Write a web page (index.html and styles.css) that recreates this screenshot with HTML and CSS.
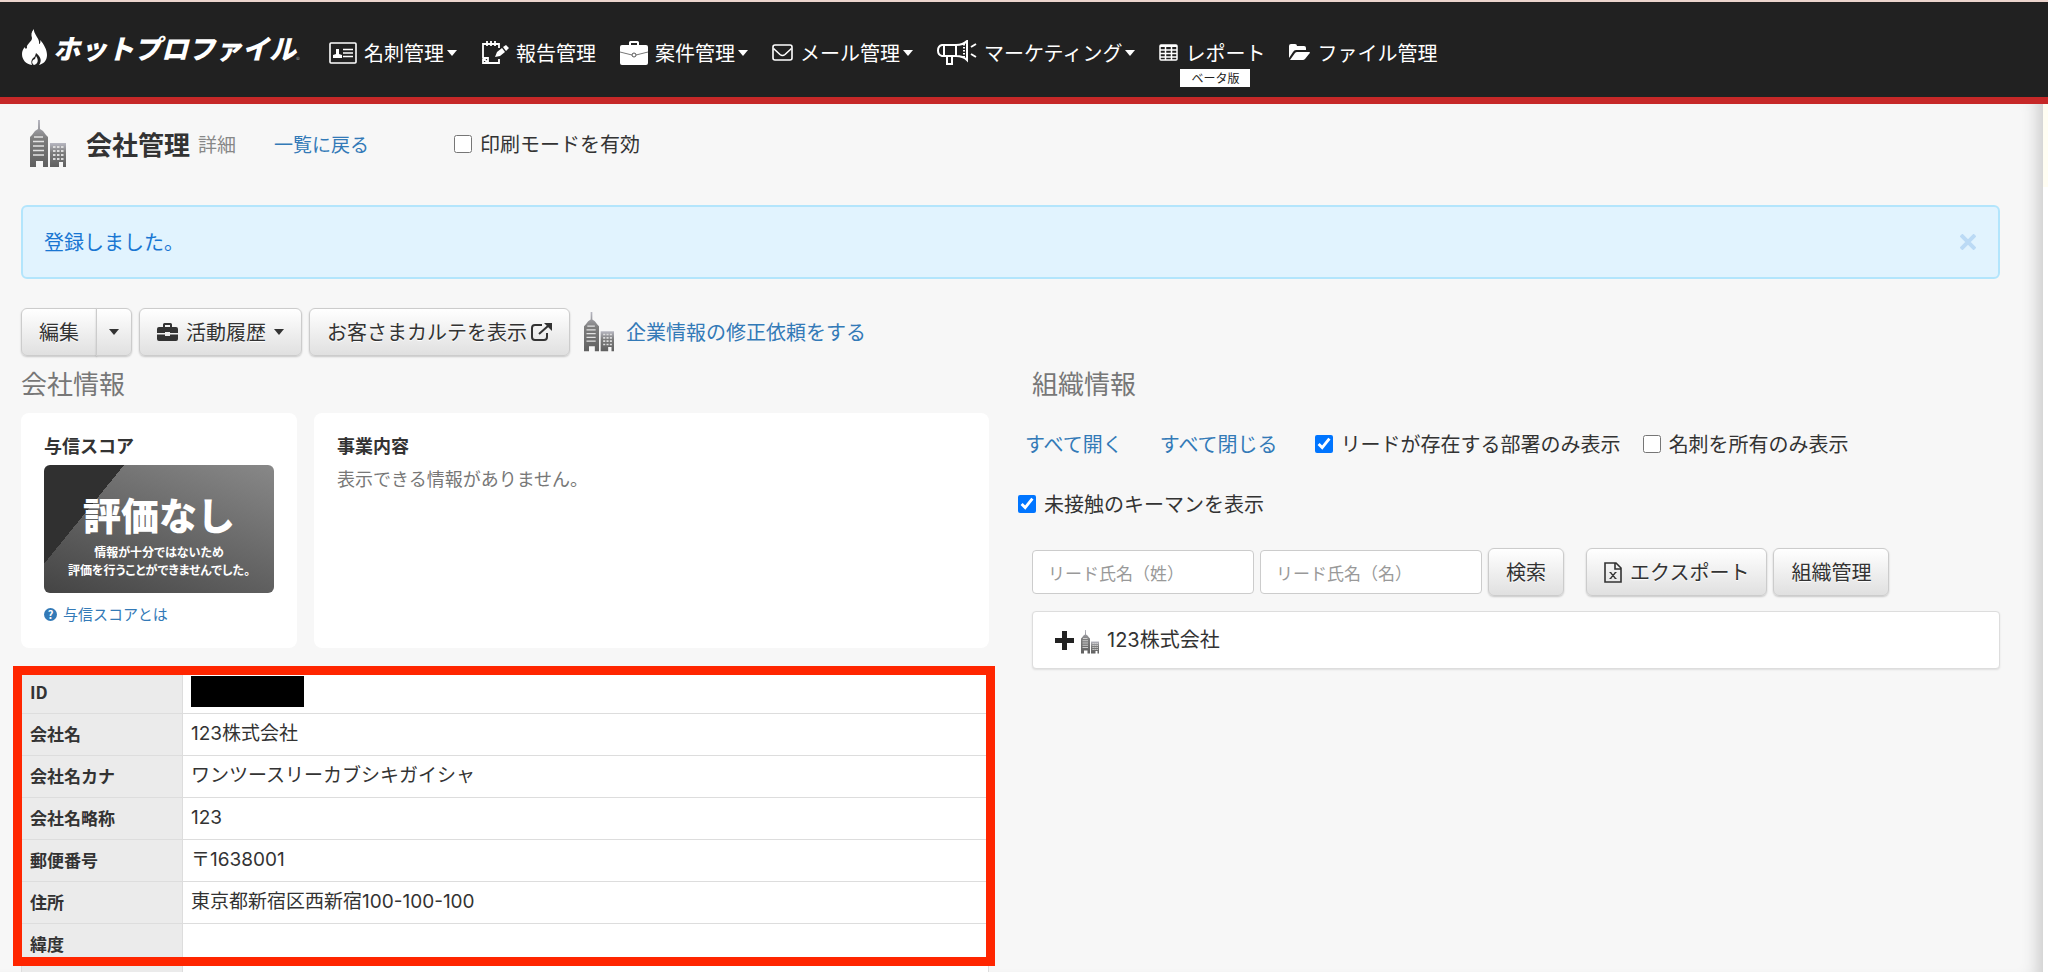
FILE: index.html
```html
<!DOCTYPE html>
<html lang="ja">
<head>
    <meta charset="UTF-8">
    <meta name="viewport" content="width=device-width, initial-scale=1.0">
    <title>会社管理 詳細</title>
    <link rel="stylesheet" href="styles.css">
</head>
<body>
    <!-- 共通アイコン -->
    <svg class="defs" aria-hidden="true">
        <defs>
            <linearGradient id="steel" x1="0" y1="0" x2="0" y2="1">
                <stop offset="0" stop-color="#b8b8c2"/>
                <stop offset="0.4" stop-color="#7d7d7d"/>
                <stop offset="1" stop-color="#606060"/>
            </linearGradient>
        </defs>
        <symbol id="building" viewBox="0 0 36 48">
            <path fill="url(#steel)" d="M8 0h2v9l3 2 3 4 2 2v30h-5v-6H6v6H0V17l2-2 3-4 3-2z"/>
            <path fill="url(#steel)" d="M20 23h16v24h-3v-5h-4v5h-9z"/>
            <path stroke="#e2e2e2" stroke-width="1.600" d="M4 17h9M3 21.500h11M3 26h11M3 30.500h11M3 35h11"/>
            <path stroke="#dcdcdc" stroke-width="2" stroke-dasharray="2.500 1.500" d="M23 27h11M23 31h11M23 35h11M23 39h11"/>
        </symbol>
    </svg>

    <header class="header">
        <a href="#" class="logo">
            <svg class="flame" viewBox="0 0 25 37">
                <path fill="#fff" d="M12 0c-1 5 6 9 5 15 1 0 2-2 1-4 4 4 7 10 7 15 0 6-4 9-8 10 3-4 2-8-3-12-1 3-1 4-3 5-2 2-2 5-1 7C4 35 0 31 0 25c0-3 1-5 3-7 0 2 1 2 2 1-1-4 5-6 5-10-1-3-1-6 2-9z"/>
                <path fill="#fff" d="M14 27c3 4 2 8-2 9-3-2-2-5 1-6z"/>
            </svg>
            <span class="logo-text">ホットプロファイル</span><small>®</small>
        </a>
        <nav class="nav">
            <a href="#">
                <svg class="i-card" viewBox="0 0 28 22" fill="none" stroke="#fff">
                    <rect x="1" y="1" width="26" height="20" rx="1" stroke-width="1.600"/>
                    <path stroke-width="1.600" d="M14 7.500h10M14 11h10M14 14.500h10"/>
                    <path fill="#fff" stroke="none" d="M4 16v-3l3-1V7h3v5l3 1v3z"/>
                </svg>
                <span>名刺管理</span><i class="caret"></i>
            </a>
            <a href="#">
                <svg class="i-note" viewBox="0 0 28 25" fill="none" stroke="#fff" stroke-width="1.800">
                    <path d="M18 19v4H7l-5-5V4h16v4M2 18h5v5M2 19v4h4"/>
                    <path d="M6 1v5M10 1v5M14 1v5"/>
                    <path fill="#fff" stroke="none" d="M14 17l2-5 5-4 3 4-5 4zM22 7l3-2 3 3-3 3z"/>
                </svg>
                <span>報告管理</span>
            </a>
            <a href="#">
                <svg class="i-case" viewBox="0 0 28 24" fill="#fff">
                    <path d="M9 4V1.500Q9 0 10.500 0h7Q19 0 19 1.500V4h-2V2h-6v2z"/>
                    <rect y="4" width="28" height="20" rx="2"/>
                    <path fill="none" stroke="#777" stroke-width="1" d="M0 11l12 3M28 11l-12 3"/>
                    <circle cx="14" cy="14" r="2" fill="none" stroke="#555"/>
                </svg>
                <span>案件管理</span><i class="caret"></i>
            </a>
            <a href="#">
                <svg class="i-mail" viewBox="0 0 21 17" fill="none" stroke="#fff" stroke-width="1.600">
                    <rect x="1" y="1" width="19" height="15" rx="2"/>
                    <path d="M1.500 4.500l6.500 6q2.500 2 5 0l6.500-6"/>
                </svg>
                <span>メール管理</span><i class="caret"></i>
            </a>
            <a href="#">
                <svg class="i-horn" viewBox="0 0 40 25" fill="none" stroke="#fff" stroke-width="2">
                    <path d="M19 5H5Q1 6 1 10.500T5 16h14zM7 5v11M19 5q7 0 11-4v19q-4-4-11-4M10 16v8h5v-8M34 7l5-3M34 14l5 3"/>
                    <path stroke-dasharray="1.500 1.500" d="M27 4v13"/>
                </svg>
                <span>マーケティング</span><i class="caret"></i>
            </a>
            <a href="#">
                <svg class="i-grid" viewBox="0 0 19 17" fill="none" stroke="#fff" stroke-width="1.500">
                    <rect x="1" y="1" width="17" height="15" rx="1"/>
                    <path stroke-width="2" d="M1 2h17"/>
                    <path d="M1 6h17M1 9.500h17M1 13h17M6.500 2v14M12.500 2v14"/>
                </svg>
                <span class="beta-item">レポート<em class="beta">ベータ版</em></span>
            </a>
            <a href="#">
                <svg class="i-folder" viewBox="0 0 21 17" fill="#fff">
                    <path d="M0 14V2Q0 0 2 0h4q2 0 2 2h7q2 0 2 2v2H7Q5 6 4 8z"/>
                    <path d="M1 16L6 9q1-1 2-1h12q2 0 0 2l-4 5q-1 1-2 1z"/>
                </svg>
                <span>ファイル管理</span>
            </a>
        </nav>
    </header>

    <div class="page">
        <main class="main">
            <div class="title-row">
                <svg class="building-lg"><use href="#building"/></svg>
                <h1>会社管理</h1>
                <span class="sub">詳細</span>
                <a href="#" class="back">一覧に戻る</a>
                <label class="check"><input type="checkbox">印刷モードを有効</label>
            </div>

            <div class="alert">
                <span>登録しました。</span>
                <button class="close" aria-label="閉じる">
                    <svg viewBox="0 0 16 16" stroke="#bbdaf5" stroke-width="4"><path d="M1 1l14 14M15 1L1 15"/></svg>
                </button>
            </div>

            <div class="toolbar">
                <div class="btn-group">
                    <button class="btn">編集</button>
                    <button class="btn btn-drop" aria-label="メニュー"><i class="caret"></i></button>
                </div>
                <button class="btn">
                    <svg class="i-bag" viewBox="0 0 21 18" fill="#333">
                        <path d="M6 4V1.500Q6 0 7.500 0h6Q15 0 15 1.500V4h4q2 0 2 2v4h-8V9H8v1H0V6q0-2 2-2zm2 0h5V2H8zM0 11.500h8V13h5v-1.500h8V16q0 2-2 2H2q-2 0-2-2z"/>
                    </svg>
                    活動履歴<i class="caret"></i>
                </button>
                <button class="btn">お客さまカルテを表示<svg class="i-ext" viewBox="0 0 21 18" fill="none" stroke="#333" stroke-width="2">
                        <path d="M11 2H4Q1 2 1 5v9q0 3 3 3h9q3 0 3-3v-4M8 11l9-8"/>
                        <path fill="#333" stroke="none" d="M13 0h8v8z"/>
                    </svg></button>
                <svg class="building-md"><use href="#building"/></svg>
                <a href="#">企業情報の修正依頼をする</a>
            </div>

            <div class="columns">
                <section>
                    <h2>会社情報</h2>
                    <div class="cards">
                        <div class="card">
                            <h3>与信スコア</h3>
                            <div class="score">
                                <strong>評価なし</strong>
                                <p>情報が十分ではないため<br>評価を行うことができませんでした。</p>
                            </div>
                            <a href="#" class="help"><b>?</b>与信スコアとは</a>
                        </div>
                        <div class="card">
                            <h3>事業内容</h3>
                            <p class="empty">表示できる情報がありません。</p>
                        </div>
                    </div>
                    <div class="table-wrap">
                        <table class="info">
                            <tbody>
                                <tr><th>ID</th><td><span class="masked"></span></td></tr>
                                <tr><th>会社名</th><td>123株式会社</td></tr>
                                <tr><th>会社名カナ</th><td>ワンツースリーカブシキガイシャ</td></tr>
                                <tr><th>会社名略称</th><td>123</td></tr>
                                <tr><th>郵便番号</th><td>〒1638001</td></tr>
                                <tr><th>住所</th><td>東京都新宿区西新宿100-100-100</td></tr>
                                <tr><th>緯度</th><td></td></tr>
                                <tr><th></th><td></td></tr>
                            </tbody>
                        </table>
                        <div class="marker"></div>
                    </div>
                </section>

                <section>
                    <h2>組織情報</h2>
                    <div class="filters">
                        <a href="#">すべて開く</a>
                        <a href="#">すべて閉じる</a>
                        <label class="check"><input type="checkbox" checked>リードが存在する部署のみ表示</label>
                        <label class="check second"><input type="checkbox">名刺を所有のみ表示</label>
                    </div>
                    <div class="filters keyman">
                        <label class="check"><input type="checkbox" checked>未接触のキーマンを表示</label>
                    </div>
                    <form class="search">
                        <input type="text" aria-label="リード氏名（姓）" placeholder="リード氏名（姓）">
                        <input type="text" aria-label="リード氏名（名）" placeholder="リード氏名（名）">
                        <button type="button" class="btn">検索</button>
                        <button type="button" class="btn export">
                            <svg class="i-xls" viewBox="0 0 18 21" fill="none" stroke="#333" stroke-width="1.600">
                                <path d="M1 1h11l5 5v14H1zM11 1v6h6"/>
                                <path stroke-width="1.200" d="M6.500 10.500l5 6M11.500 10.500l-5 6M5.500 10.500h2M10.500 10.500h2M5.500 16.500h2M10.500 16.500h2"/>
                            </svg>
                            エクスポート
                        </button>
                        <button type="button" class="btn">組織管理</button>
                    </form>
                    <div class="tree">
                        <svg class="i-plus" viewBox="0 0 19 19" fill="#222"><path d="M7 0h5v7h7v5h-7v7H7v-7H0V7h7z"/></svg>
                        <svg class="building-sm"><use href="#building"/></svg>
                        <span>123株式会社</span>
                    </div>
                </section>
            </div>
        </main>
        <aside class="side"></aside>
    </div>
</body>
</html>
```
FILE: styles.css
```css
* {
    box-sizing: border-box;
}
body {
    margin: 0;
    height: 100vh;
    overflow: hidden;
    display: flex;
    flex-direction: column;
    background-color: #f7f7f7;
    color: #333;
    font-family: "Noto Sans CJK JP", sans-serif;
    font-size: 20px;
    line-height: 24px;
}
h1, h2, h3, p {
    margin: 0;
}
a {
    color: #337ab7;
    text-decoration: none;
}
svg {
    display: block;
    flex: none;
}
.defs {
    position: absolute;
    width: 0;
    height: 0;
}
.caret {
    border: 5px solid transparent;
    border-top: 6px solid currentColor;
    border-bottom: 0;
}

/* ヘッダー */
.header {
    flex: none;
    display: flex;
    align-items: center;
    height: 104px;
    padding-left: 22px;
    background-color: #212121;
    border-top: 2px solid #ecd4cd;
    border-bottom: 7px solid #c62828;
    white-space: nowrap;
}
.header a {
    color: #fff;
}
.logo {
    display: flex;
    align-items: center;
    width: 307px;
    padding-bottom: 4px;
}
.flame {
    width: 25px;
    height: 37px;
    margin-right: 6px;
}
.logo-text {
    font-size: 27px;
    font-weight: 900;
    font-style: italic;
    line-height: 36px;
}
.logo small {
    align-self: flex-end;
    font-size: 8px;
    line-height: 12px;
    color: #999;
}
.nav {
    display: flex;
    gap: 24px;
    padding-top: 6px;
}
.nav a {
    display: flex;
    align-items: center;
    gap: 7px;
}
.nav .caret {
    margin-left: -4px;
}
.i-card {
    width: 28px;
    height: 22px;
}
.i-note {
    width: 28px;
    height: 25px;
}
.i-case {
    width: 28px;
    height: 24px;
}
.i-mail, .i-folder {
    width: 21px;
    height: 17px;
}
.i-horn {
    width: 40px;
    height: 25px;
}
.i-grid {
    width: 19px;
    height: 17px;
}
.beta-item {
    position: relative;
}
.beta {
    position: absolute;
    top: 28px;
    left: -5px;
    width: 70px;
    background-color: #fff;
    color: #222;
    font-size: 12px;
    font-style: normal;
    line-height: 18px;
    text-align: center;
}

/* 本文 */
.page {
    flex: 1;
    display: flex;
    min-height: 0;
}
.main {
    flex: 1;
    padding: 16px 43px 0 21px;
    box-shadow: inset -18px 0 18px -14px rgba(0, 0, 0, 0.2);
}
.side {
    width: 5px;
    background: linear-gradient(#fffdf2 83px, #fff 83px);
}
.title-row {
    display: flex;
    align-items: center;
    height: 48px;
    padding-left: 9px;
}
.building-lg {
    width: 36px;
    height: 48px;
    margin-right: 20px;
}
.title-row h1 {
    font-size: 26px;
    line-height: 36px;
}
.sub {
    margin-left: 8px;
    color: #888;
    font-size: 19px;
}
.back {
    margin: 0 85px 0 38px;
    font-size: 19px;
}
.check {
    display: flex;
    align-items: center;
    gap: 8px;
}
.check input {
    width: 18px;
    height: 18px;
    margin: 0;
}
.alert {
    display: flex;
    align-items: center;
    justify-content: space-between;
    height: 74px;
    margin-top: 37px;
    padding: 0 22px 0 21px;
    background-color: #e1f3fe;
    border: 2px solid #b3e5fc;
    border-radius: 6px;
    color: #1976d2;
}
.close {
    padding: 0;
    background: none;
    border: 0;
}
.close svg {
    width: 16px;
    height: 16px;
}
.toolbar {
    display: flex;
    align-items: center;
    gap: 7px;
    margin-top: 29px;
}
.btn {
    display: flex;
    align-items: center;
    height: 48px;
    padding: 0 17px;
    background: linear-gradient(#fff, #e0e0e0);
    border: 1px solid #ccc;
    border-radius: 6px;
    box-shadow: 0 1px 2px rgba(0, 0, 0, 0.2);
    color: #333;
    font: inherit;
    text-shadow: 0 1px 1px #fff;
    white-space: nowrap;
}
.btn-group {
    display: flex;
}
.btn-group .btn:first-child {
    border-radius: 6px 0 0 6px;
}
.btn-group .btn-drop {
    margin-left: -1px;
    padding: 0 12px;
    border-radius: 0 6px 6px 0;
}
.i-bag {
    width: 21px;
    height: 18px;
    margin-right: 8px;
}
.i-bag + .caret, .btn > .caret {
    margin-left: 8px;
}
.btn-drop > .caret {
    margin: 0;
}
.i-ext {
    width: 21px;
    height: 18px;
    margin-left: 4px;
}
.building-md {
    width: 30px;
    height: 40px;
    margin: 0 5px 0 7px;
}
.columns {
    display: grid;
    grid-template-columns: 1fr 1fr;
    gap: 43px;
    margin-top: 8px;
}
h2 {
    color: #777;
    font-size: 26px;
    font-weight: normal;
    line-height: 38px;
}

/* 会社情報 */
.cards {
    display: grid;
    grid-template-columns: 276px 1fr;
    gap: 17px;
    margin-top: 11px;
}
.card {
    padding: 20px 23px 22px;
    background-color: #fff;
    border-radius: 8px;
}
.card h3 {
    font-size: 18px;
    line-height: 24px;
}
.score {
    height: 128px;
    margin: 8px 0 9px;
    padding-top: 27px;
    background: linear-gradient(129deg, #303030 24%, transparent 24%), linear-gradient(20deg, #444, #888);
    border-radius: 6px;
    color: #fff;
    text-align: center;
    font-weight: bold;
}
.score strong {
    display: block;
    font-size: 38px;
    line-height: 44px;
}
.score p {
    margin-top: 7px;
    font-size: 12px;
    line-height: 18px;
    font-feature-settings: "palt";
    white-space: nowrap;
}
.help {
    display: flex;
    align-items: center;
    gap: 6px;
    font-size: 15px;
}
.help b {
    width: 13px;
    height: 13px;
    background-color: #337ab7;
    border-radius: 50%;
    color: #fff;
    font-size: 11px;
    line-height: 13px;
    text-align: center;
}
.empty {
    margin-top: 9px;
    color: #777;
    font-size: 18px;
}
.table-wrap {
    position: relative;
    margin-top: 24px;
}
.info {
    width: 100%;
    background-color: #fff;
    border-collapse: separate;
    border-spacing: 0;
    border: solid #ddd;
    border-width: 0 1px;
}
.info tr {
    height: 42px;
}
.info th, .info td {
    padding: 0 8px 2px;
    border-bottom: 1px solid #ddd;
    text-align: left;
}
.info th {
    width: 161px;
    background-color: #ebebeb;
    border-right: 1px solid #ddd;
    font-size: 17px;
}
.info td {
    font-family: Inter, "Noto Sans CJK JP", sans-serif;
    font-size: 19px;
}
.masked {
    display: block;
    width: 113px;
    height: 31px;
    background-color: #000;
}
.marker {
    position: absolute;
    top: -6px;
    left: -8px;
    right: -6px;
    height: 300px;
    border: 9px solid #ff2600;
}

/* 組織情報 */
.filters {
    display: flex;
    align-items: center;
    gap: 37px;
    margin: 30px 0 0 -7px;
    white-space: nowrap;
}
.filters .second {
    margin-left: -15px;
}
.keyman {
    margin: 36px 0 0 -14px;
}
.search {
    display: flex;
    align-items: center;
    gap: 6px;
    margin-top: 32px;
}
.search input {
    width: 222px;
    height: 44px;
    padding: 0 15px;
    background-color: #fff;
    border: 1px solid #ccc;
    border-radius: 4px;
    font: inherit;
    font-size: 17px;
}
.search input::placeholder {
    color: #999;
}
.export {
    margin-left: 16px;
}
.i-xls {
    width: 18px;
    height: 21px;
    margin-right: 8px;
}
.tree {
    display: flex;
    align-items: center;
    height: 58px;
    margin-top: 15px;
    padding-left: 22px;
    background-color: #fff;
    border: 1px solid #ddd;
    border-radius: 4px;
    box-shadow: 0 1px 2px rgba(0, 0, 0, 0.1);
    font-family: Inter, "Noto Sans CJK JP", sans-serif;
}
.i-plus {
    width: 19px;
    height: 19px;
}
.building-sm {
    width: 18px;
    height: 24px;
    margin: 4px 8px 0 7px;
}
```
